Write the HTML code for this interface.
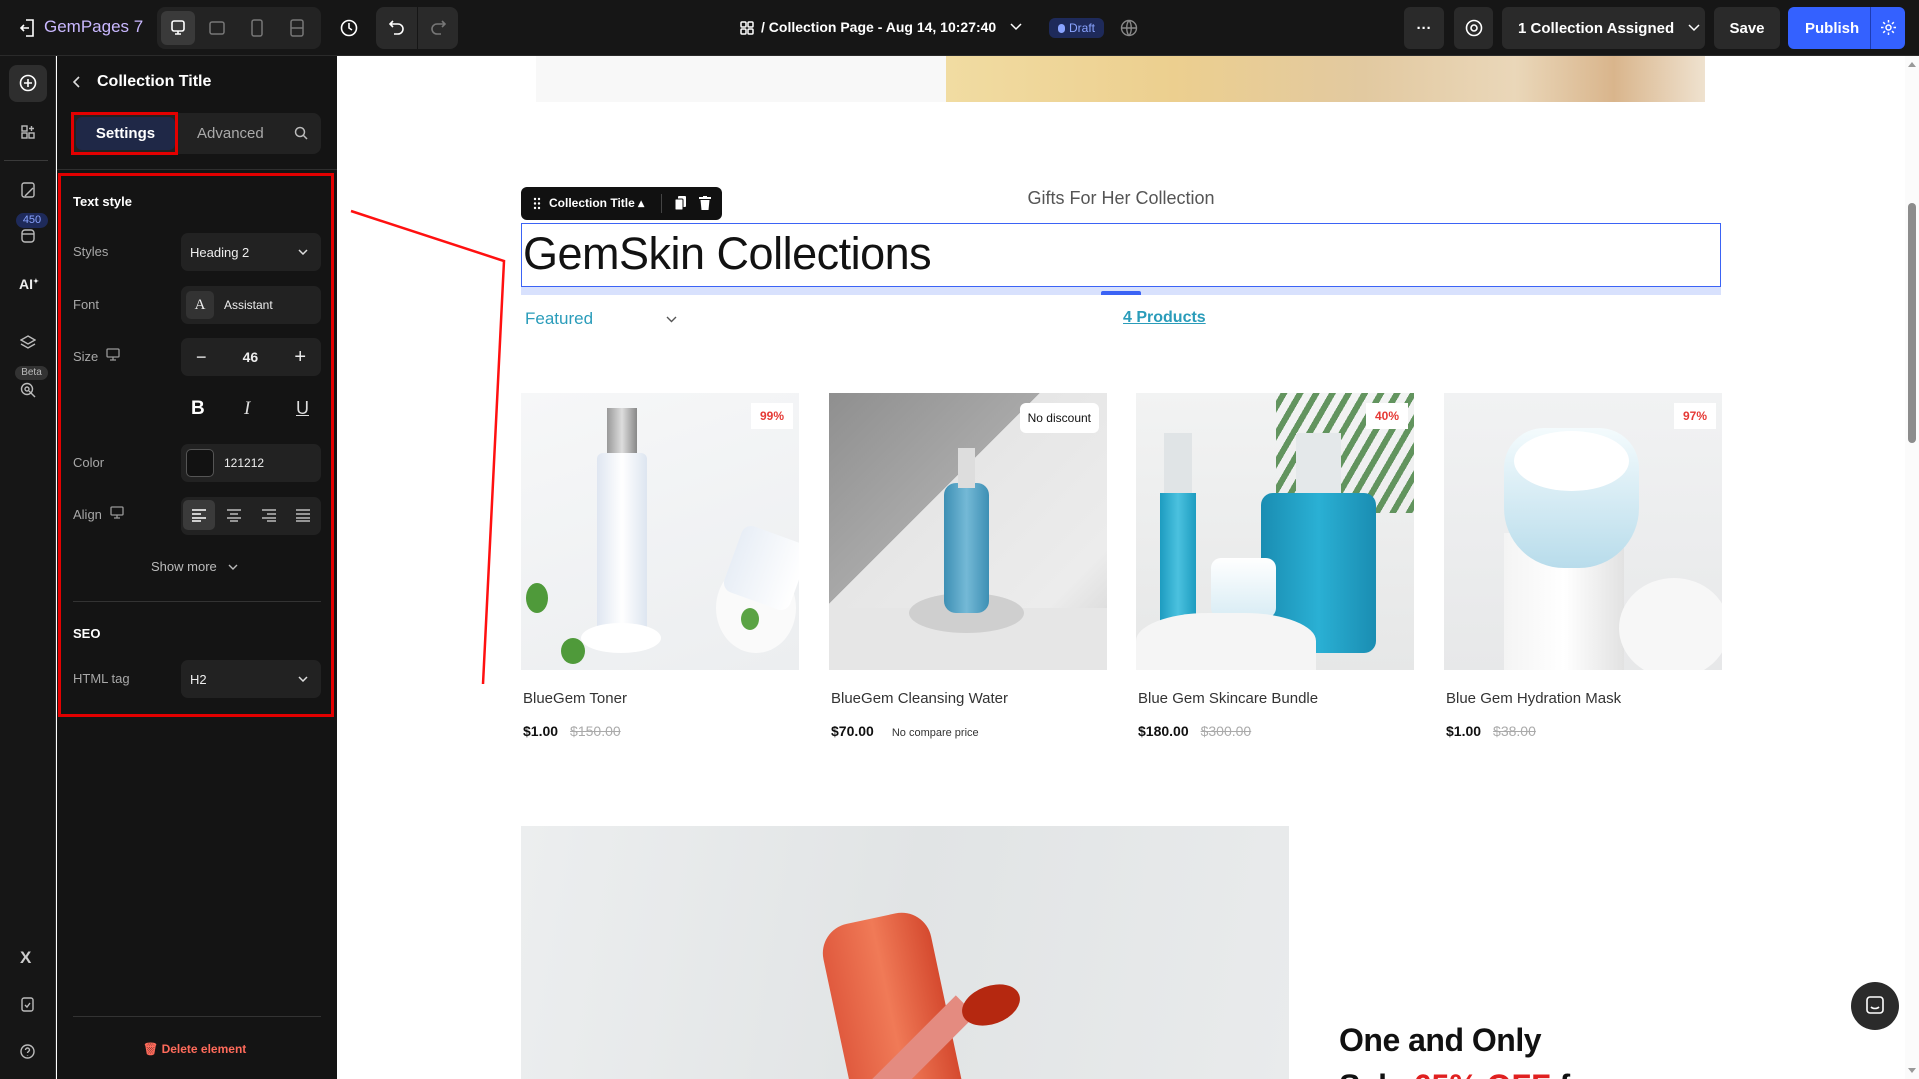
<!DOCTYPE html>
<html style="overflow:hidden;height:1079px"><head><meta charset="utf-8"><style>
*{box-sizing:border-box;margin:0;padding:0}
body{width:1919px;height:1079px;overflow:hidden;background:#fff;font-family:"Liberation Sans",sans-serif;position:relative}
.a{position:absolute}
.top{left:0;top:0;width:1919px;height:56px;background:#161616;border-bottom:1px solid #2a2a2a}
.btn{position:absolute;background:#2a2a2a;border-radius:6px;color:#fff;font-size:15px;font-weight:bold;display:flex;align-items:center;justify-content:center}
.rail{left:0;top:56px;width:56px;height:1023px;background:#161616;border-right:1px solid #2c2c2c}
.panel{left:57px;top:56px;width:280px;height:1023px;background:#141414}
.lbl{position:absolute;left:73px;color:#a8a8a8;font-size:13px}
.inp{position:absolute;left:181px;width:140px;height:38px;background:#222;border-radius:7px;color:#eee;font-size:13px;display:flex;align-items:center}
.card{position:absolute;top:393px;width:278px;height:277px;overflow:hidden}
.badge{position:absolute;top:10px;right:6px;background:#fff;color:#e53935;font-size:12px;font-weight:bold;padding:6px 9px}
.pn{position:absolute;top:690px;font-size:15px;color:#333}
.pp{position:absolute;top:723px;font-size:14px;font-weight:bold;color:#111}
.old{font-weight:normal;color:#aaa;text-decoration:line-through;margin-left:12px}
svg{display:block}
</style></head><body>
<div class="a top">
 <svg class="a" style="left:20px;top:19px" width="16" height="18" viewBox="0 0 16 18" fill="none" stroke="#fff" stroke-width="1.6"><path d="M6 1h7v16H6M9 9H1M4 6l-3 3 3 3"/></svg>
 <div class="a" style="left:44px;top:17px;color:#c9b8ff;font-size:17px">GemPages 7</div>
 <div class="a" style="left:157px;top:7px;width:164px;height:42px;background:#232323;border-radius:8px"></div>
 <div class="a" style="left:161px;top:11px;width:34px;height:34px;background:#3a3a3a;border-radius:6px"></div>
 <svg class="a" style="left:170px;top:20px" width="16" height="16" fill="none" stroke="#fff" stroke-width="1.6"><rect x="2" y="1" width="12" height="10" rx="2"/><path d="M8 11v3M5 14h6"/></svg>
 <svg class="a" style="left:209px;top:20px" width="16" height="16" fill="none" stroke="#777" stroke-width="1.5"><rect x="1" y="2" width="14" height="12" rx="2"/></svg>
 <svg class="a" style="left:251px;top:19px" width="12" height="18" fill="none" stroke="#777" stroke-width="1.5"><rect x="1" y="1" width="10" height="16" rx="2"/></svg>
 <svg class="a" style="left:289px;top:19px" width="16" height="18" fill="none" stroke="#777" stroke-width="1.5"><rect x="2" y="1" width="12" height="16" rx="2"/><path d="M2 9h12"/></svg>
 <svg class="a" style="left:340px;top:19px" width="18" height="18" fill="none" stroke="#fff" stroke-width="1.6"><circle cx="9" cy="9" r="7.5"/><path d="M9 4v5l3 2"/></svg>
 <div class="a" style="left:376px;top:7px;width:82px;height:42px;background:#2a2a2a;border-radius:8px"></div>
 <div class="a" style="left:417px;top:7px;width:1px;height:42px;background:#161616"></div>
 <svg class="a" style="left:389px;top:19px" width="16" height="18" fill="none" stroke="#fff" stroke-width="1.6"><path d="M4 2L1 5l3 3M1 5h8a5 5 0 010 10H5"/></svg>
 <svg class="a" style="left:430px;top:19px" width="16" height="18" fill="none" stroke="#777" stroke-width="1.6"><path d="M12 2l3 3-3 3M15 5H7a5 5 0 000 10h4"/></svg>
 <svg class="a" style="left:740px;top:21px" width="14" height="14" fill="none" stroke="#fff" stroke-width="1.5"><rect x="1" y="1" width="5" height="5" rx="1"/><rect x="8" y="1" width="5" height="5" rx="1"/><rect x="1" y="8" width="5" height="5" rx="1"/><rect x="8" y="8" width="5" height="5" rx="1"/></svg>
 <div class="a" style="left:761px;top:19px;color:#fff;font-size:14px;font-weight:bold">/ Collection Page - Aug 14, 10:27:40</div>
 <svg class="a" style="left:1010px;top:23px" width="12" height="8" fill="none" stroke="#fff" stroke-width="1.5"><path d="M1 1l5 5 5-5"/></svg>
 <div class="a" style="left:1049px;top:18px;width:55px;height:20px;background:#1e2a5a;border-radius:6px;color:#8aa4ff;font-size:12px;display:flex;align-items:center;justify-content:center"><span style="display:inline-block;width:7px;height:9px;border-radius:4px;background:#8aa4ff;margin-right:4px"></span>Draft</div>
 <svg class="a" style="left:1120px;top:19px" width="18" height="18" fill="none" stroke="#888" stroke-width="1.4"><circle cx="9" cy="9" r="7.5"/><path d="M1.5 9h15M9 1.5c-3 3-3 12 0 15M9 1.5c3 3 3 12 0 15"/></svg>
 <div class="btn" style="left:1404px;top:7px;width:40px;height:42px">···</div>
 <div class="btn" style="left:1454px;top:7px;width:39px;height:42px"><svg width="18" height="18" fill="none" stroke="#fff" stroke-width="1.6"><circle cx="9" cy="9" r="7.5"/><circle cx="9" cy="9" r="3"/></svg></div>
 <div class="btn" style="left:1502px;top:7px;width:203px;height:42px;justify-content:flex-start;padding-left:16px">1 Collection Assigned<svg style="margin-left:14px" width="12" height="8" fill="none" stroke="#fff" stroke-width="1.5"><path d="M1 1l5 5 5-5"/></svg></div>
 <div class="btn" style="left:1714px;top:7px;width:66px;height:42px">Save</div>
 <div class="btn" style="left:1788px;top:7px;width:117px;height:42px;background:#3461ff;justify-content:flex-start;padding-left:17px">Publish</div>
 <div class="a" style="left:1870px;top:7px;width:1px;height:42px;background:#1d3cb5"></div>
 <svg class="a" style="left:1880px;top:19px" width="17" height="17" fill="none" stroke="#fff" stroke-width="1.5"><circle cx="8.5" cy="8.5" r="2.5"/><path d="M8.5 1v2.5M8.5 13.5V16M1 8.5h2.5M13.5 8.5H16M3.2 3.2l1.8 1.8M12 12l1.8 1.8M3.2 13.8L5 12M12 5l1.8-1.8"/></svg>
</div>
<div class="a rail">
 <div class="a" style="left:9px;top:9px;width:38px;height:37px;background:#2e2e2e;border-radius:8px"></div>
 <svg class="a" style="left:19px;top:18px" width="18" height="18" fill="none" stroke="#fff" stroke-width="1.6"><circle cx="9" cy="9" r="7.5"/><path d="M9 5v8M5 9h8"/></svg>
 <svg class="a" style="left:21px;top:69px" width="14" height="14" fill="none" stroke="#bbb" stroke-width="1.4"><rect x="1" y="1" width="5" height="5"/><rect x="1" y="8" width="5" height="5"/><rect x="8" y="8" width="5" height="5"/><path d="M10.5 1v5M8 3.5h5"/></svg>
 <div class="a" style="left:4px;top:104px;width:44px;height:1px;background:#3a3a3a"></div>
 <svg class="a" style="left:21px;top:126px" width="14" height="16" fill="none" stroke="#bbb" stroke-width="1.4"><rect x="1" y="1" width="12" height="14" rx="2"/><path d="M4 14l8-8"/></svg>
 <div class="a" style="left:16px;top:157px;width:32px;height:15px;background:#1e2a5a;border-radius:8px;color:#8aa4ff;font-size:11px;text-align:center;line-height:15px">450</div>
 <svg class="a" style="left:21px;top:173px" width="14" height="14" fill="none" stroke="#bbb" stroke-width="1.4"><rect x="1" y="1" width="12" height="12" rx="3"/><path d="M1 5h12"/></svg>
 <div class="a" style="left:19px;top:220px;color:#eee;font-size:14px;font-weight:bold">AI<sup style="font-size:7px">✦</sup></div>
 <svg class="a" style="left:20px;top:279px" width="16" height="16" fill="none" stroke="#bbb" stroke-width="1.4"><path d="M8 1l7 4-7 4-7-4zM1 9l7 4 7-4"/></svg>
 <div class="a" style="left:15px;top:310px;width:33px;height:14px;background:#333;border-radius:7px;color:#bbb;font-size:10px;text-align:center;line-height:14px">Beta</div>
 <svg class="a" style="left:20px;top:326px" width="16" height="16" fill="none" stroke="#bbb" stroke-width="1.4"><circle cx="7" cy="7" r="5.5"/><circle cx="7" cy="7" r="2"/><path d="M9 9l6 6"/></svg>
 <div class="a" style="left:20px;top:892px;color:#ccc;font-size:17px;font-weight:bold">X</div>
 <svg class="a" style="left:21px;top:940px" width="13" height="16" fill="none" stroke="#bbb" stroke-width="1.4"><rect x="1" y="2" width="11" height="13" rx="2"/><path d="M4 9l2 2 3-4"/></svg>
 <svg class="a" style="left:20px;top:988px" width="15" height="15" fill="none" stroke="#bbb" stroke-width="1.4"><circle cx="7.5" cy="7.5" r="6.5"/><path d="M5.5 6a2 2 0 114 0c0 1.5-2 1.5-2 3M7.5 11v.5"/></svg>
</div>
<div class="a panel"></div>
<svg class="a" style="left:73px;top:76px" width="8" height="12" fill="none" stroke="#ddd" stroke-width="1.6"><path d="M6 1L1 6l5 5"/></svg>
<div class="a" style="left:97px;top:73px;color:#fff;font-size:16px;font-weight:bold">Collection Title</div>
<div class="a" style="left:71px;top:113px;width:250px;height:41px;background:#222;border-radius:8px"></div>
<div class="a" style="left:76px;top:117px;width:99px;height:33px;background:#1f2847;border-radius:6px;color:#fff;font-size:15px;font-weight:bold;text-align:center;line-height:33px">Settings</div>
<div class="a" style="left:71px;top:112px;width:107px;height:43px;border:3px solid #e30000"></div>
<div class="a" style="left:197px;top:125px;color:#aaa;font-size:15px">Advanced</div>
<svg class="a" style="left:294px;top:126px" width="14" height="14" fill="none" stroke="#bbb" stroke-width="1.5"><circle cx="6" cy="6" r="4.5"/><path d="M9.5 9.5l3.5 3.5"/></svg>
<div class="a" style="left:57px;top:169px;width:280px;height:1px;background:#2e2e2e"></div>
<div class="a" style="left:58px;top:173px;width:276px;height:544px;border:3px solid #e30000"></div>
<div class="a" style="left:73px;top:194px;color:#fff;font-size:13px;font-weight:bold">Text style</div>
<div class="lbl" style="top:244px">Styles</div>
<div class="inp" style="top:233px;padding-left:9px">Heading 2<svg style="position:absolute;right:13px" width="10" height="6" fill="none" stroke="#ddd" stroke-width="1.5"><path d="M1 1l4 4 4-4"/></svg></div>
<div class="lbl" style="top:297px">Font</div>
<div class="inp" style="top:286px"><span style="width:28px;height:28px;margin:0 10px 0 5px;background:#333;border-radius:5px;text-align:center;line-height:28px;font-family:'Liberation Serif',serif;font-size:15px">A</span><span style="font-size:12px">Assistant</span></div>
<div class="lbl" style="top:349px">Size</div>
<svg class="a" style="left:106px;top:348px" width="14" height="13" fill="none" stroke="#999" stroke-width="1.3"><rect x="1" y="1" width="12" height="8" rx="1"/><path d="M7 9v3M4 12h6"/></svg>
<div class="inp" style="top:338px;justify-content:space-between;padding:0 15px;font-size:14px;font-weight:bold"><span style="font-size:18px;font-weight:normal">−</span><span>46</span><span style="font-size:20px;font-weight:normal">+</span></div>
<div class="a" style="left:191px;top:398px;color:#fff;font-size:19px;font-weight:bold">B</div>
<div class="a" style="left:244px;top:398px;color:#ddd;font-size:19px;font-style:italic;font-family:'Liberation Serif',serif">I</div>
<div class="a" style="left:296px;top:398px;color:#ddd;font-size:18px;text-decoration:underline">U</div>
<div class="lbl" style="top:455px">Color</div>
<div class="inp" style="top:444px"><span style="width:28px;height:28px;margin:0 10px 0 5px;background:#121212;border:1px solid #555;border-radius:5px"></span><span style="font-size:12px">121212</span></div>
<div class="lbl" style="top:507px">Align</div>
<svg class="a" style="left:110px;top:506px" width="14" height="13" fill="none" stroke="#999" stroke-width="1.3"><rect x="1" y="1" width="12" height="8" rx="1"/><path d="M7 9v3M4 12h6"/></svg>
<div class="inp" style="top:497px"></div>
<div class="a" style="left:183px;top:500px;width:32px;height:30px;background:#3a3a3a;border-radius:5px"></div>
<svg class="a" style="left:191px;top:508px" width="16" height="14" stroke="#fff" stroke-width="1.4"><path d="M1 2h14M1 6h9M1 10h14M1 13h9"/></svg>
<svg class="a" style="left:226px;top:508px" width="16" height="14" stroke="#bbb" stroke-width="1.4"><path d="M1 2h14M4 6h8M1 10h14M4 13h8"/></svg>
<svg class="a" style="left:261px;top:508px" width="16" height="14" stroke="#bbb" stroke-width="1.4"><path d="M1 2h14M6 6h9M1 10h14M6 13h9"/></svg>
<svg class="a" style="left:295px;top:508px" width="16" height="14" stroke="#bbb" stroke-width="1.4"><path d="M1 2h14M1 6h14M1 10h14M1 13h14"/></svg>
<div class="a" style="left:151px;top:559px;color:#bbb;font-size:13px">Show more</div>
<svg class="a" style="left:228px;top:564px" width="10" height="6" fill="none" stroke="#bbb" stroke-width="1.4"><path d="M1 1l4 4 4-4"/></svg>
<div class="a" style="left:73px;top:601px;width:248px;height:1px;background:#333"></div>
<div class="a" style="left:73px;top:626px;color:#fff;font-size:13px;font-weight:bold">SEO</div>
<div class="lbl" style="top:671px">HTML tag</div>
<div class="inp" style="top:660px;padding-left:9px">H2<svg style="position:absolute;right:13px" width="10" height="6" fill="none" stroke="#ddd" stroke-width="1.5"><path d="M1 1l4 4 4-4"/></svg></div>
<div class="a" style="left:73px;top:1016px;width:248px;height:1px;background:#333"></div>
<div class="a" style="left:143px;top:1042px;color:#ff6b5b;font-size:12px;font-weight:bold">🗑︎ Delete element</div>
<svg class="a" style="left:337px;top:56px" width="1568" height="1023"><path d="M14 155L167 205L146 628" fill="none" stroke="#ff1010" stroke-width="2.5"/></svg>
<div class="a" style="left:536px;top:56px;width:410px;height:46px;background:#f8f8f8"></div>
<div class="a" style="left:946px;top:56px;width:759px;height:46px;background:linear-gradient(90deg,#f1dca2,#eccf8f 30%,#e2c9a0 55%,#ead7b9 75%,#d9b58c 88%,#efe2cf)"></div>
<div class="a" style="left:521px;top:188px;width:1200px;text-align:center;color:#555;font-size:18px">Gifts For Her Collection</div>
<div class="a" style="left:521px;top:187px;width:201px;height:33px;background:#111;border-radius:6px;color:#fff;font-size:12px;font-weight:bold;line-height:33px;padding-left:28px">Collection Title ▴</div>
<svg class="a" style="left:533px;top:197px" width="8" height="13" fill="#fff"><circle cx="2" cy="2" r="1.2"/><circle cx="6" cy="2" r="1.2"/><circle cx="2" cy="6.5" r="1.2"/><circle cx="6" cy="6.5" r="1.2"/><circle cx="2" cy="11" r="1.2"/><circle cx="6" cy="11" r="1.2"/></svg>
<div class="a" style="left:661px;top:194px;width:1px;height:19px;background:#444"></div>
<svg class="a" style="left:675px;top:196px" width="11" height="14" fill="#fff"><rect x="3" y="0" width="8" height="11" rx="1"/><rect x="0" y="3" width="8" height="11" rx="1" stroke="#111"/></svg>
<svg class="a" style="left:699px;top:196px" width="12" height="14" fill="#fff"><rect x="0" y="1" width="12" height="2"/><rect x="4" y="0" width="4" height="2"/><path d="M1.5 4h9l-1 10h-7z"/></svg>
<div class="a" style="left:521px;top:223px;width:1200px;height:64px;border:1.5px solid #3b63f5"></div>
<div class="a" style="left:521px;top:287px;width:1200px;height:8px;background:#d8e1fd"></div>
<div class="a" style="left:1101px;top:291px;width:40px;height:4px;background:#3b63f5;border-radius:2px 2px 0 0"></div>
<div class="a" style="left:523px;top:228px;color:#121212;font-size:45px;letter-spacing:-0.5px">GemSkin Collections</div>
<div class="a" style="left:525px;top:309px;color:#2a9cba;font-size:17px">Featured</div>
<svg class="a" style="left:666px;top:316px" width="11" height="7" fill="none" stroke="#555" stroke-width="1.4"><path d="M1 1l4.5 4.5L10 1"/></svg>
<div class="a" style="left:1123px;top:309px;color:#2a9cba;font-size:16px;font-weight:bold;text-decoration:underline">4 Products</div>
<div class="card" style="left:521px;background:linear-gradient(160deg,#f6f7f8,#eceef0)">
 <div class="a" style="left:86px;top:15px;width:30px;height:45px;background:linear-gradient(90deg,#999,#ddd,#888)"></div>
 <div class="a" style="left:76px;top:60px;width:50px;height:180px;background:linear-gradient(90deg,#dfe6f1,#fff,#dde5f0);border-radius:6px"></div>
 <div class="a" style="left:60px;top:230px;width:80px;height:30px;background:#fff;border-radius:50%"></div>
 <div class="a" style="left:195px;top:170px;width:80px;height:90px;background:#fafafa;border-radius:50%"></div>
 <div class="a" style="left:210px;top:140px;width:70px;height:70px;background:linear-gradient(90deg,#e8eef6,#fff);border-radius:10px;transform:rotate(20deg)"></div>
 <div class="a" style="left:5px;top:190px;width:22px;height:30px;background:#4f9a3a;border-radius:50%"></div>
 <div class="a" style="left:40px;top:245px;width:24px;height:26px;background:#4f9a3a;border-radius:50%"></div>
 <div class="a" style="left:220px;top:215px;width:18px;height:22px;background:#5aa344;border-radius:50%"></div>
 <div class="badge">99%</div>
</div>
<div class="card" style="left:829px;background:linear-gradient(135deg,#8f8f8f 0%,#a8a8a8 38%,#e6e6e6 38%,#ececec 78%,#d0d0d0 100%)">
 <div class="a" style="left:0;top:215px;width:278px;height:62px;background:#e6e6e6"></div>
 <div class="a" style="left:80px;top:200px;width:115px;height:40px;background:#cfcfcf;border-radius:50%"></div>
 <div class="a" style="left:115px;top:90px;width:45px;height:130px;background:linear-gradient(90deg,#3d8fb4,#74b9d6,#3d8fb4);border-radius:12px"></div>
 <div class="a" style="left:129px;top:55px;width:17px;height:40px;background:#ddd"></div>
 <div class="a" style="right:8px;top:10px;background:#fff;border-radius:6px;font-size:12px;padding:8px 8px;color:#111">No discount</div>
</div>
<div class="card" style="left:1136px;background:linear-gradient(180deg,#f2f3f3,#e6e7e7)">
 <div class="a" style="left:140px;top:-20px;width:160px;height:140px;background:repeating-linear-gradient(120deg,#3f7d3a 0 6px,transparent 6px 14px);opacity:.8"></div>
 <div class="a" style="left:24px;top:100px;width:36px;height:150px;background:linear-gradient(90deg,#1d9cc0,#4bc1df,#1d9cc0)"></div>
 <div class="a" style="left:28px;top:40px;width:28px;height:60px;background:#e0e4e6"></div>
 <div class="a" style="left:125px;top:100px;width:115px;height:160px;background:linear-gradient(90deg,#1a8db2,#2ab0d4,#1a8db2);border-radius:12px"></div>
 <div class="a" style="left:160px;top:40px;width:45px;height:60px;background:#e4e8ea"></div>
 <div class="a" style="left:75px;top:165px;width:65px;height:60px;background:linear-gradient(#fff,#d8ecf4);border-radius:10px"></div>
 <div class="a" style="left:0;top:220px;width:180px;height:70px;background:#f5f5f5;border-radius:40% 40% 0 0"></div>
 <div class="badge">40%</div>
</div>
<div class="card" style="left:1444px;background:linear-gradient(180deg,#f1f2f3,#e7e8e9)">
 <div class="a" style="left:60px;top:140px;width:120px;height:137px;background:linear-gradient(90deg,#f4f4f4,#fff,#e2e2e2)"></div>
 <div class="a" style="left:60px;top:35px;width:135px;height:140px;background:linear-gradient(180deg,#f4fbfd,#b8dceb);border-radius:40px 40px 60px 60px"></div>
 <div class="a" style="left:70px;top:38px;width:115px;height:60px;background:#fff;border-radius:50%"></div>
 <div class="a" style="left:175px;top:185px;width:110px;height:100px;background:#f7f7f7;border-radius:50%"></div>
 <div class="badge">97%</div>
</div>
<div class="pn" style="left:523px">BlueGem Toner</div>
<div class="pp" style="left:523px">$1.00<span class="old">$150.00</span></div>
<div class="pn" style="left:831px">BlueGem Cleansing Water</div>
<div class="pp" style="left:831px">$70.00<span style="font-weight:normal;font-size:11px;margin-left:18px;color:#333">No compare price</span></div>
<div class="pn" style="left:1138px">Blue Gem Skincare Bundle</div>
<div class="pp" style="left:1138px">$180.00<span class="old">$300.00</span></div>
<div class="pn" style="left:1446px">Blue Gem Hydration Mask</div>
<div class="pp" style="left:1446px">$1.00<span class="old">$38.00</span></div>
<div class="a" style="left:521px;top:826px;width:768px;height:253px;background:linear-gradient(100deg,#eceeef,#e1e4e5 50%,#e9ebec);overflow:hidden">
 <div class="a" style="left:320px;top:90px;width:110px;height:240px;background:linear-gradient(90deg,#e05a3e,#f07a57,#d54a2f);border-radius:30px 30px 0 0;transform:rotate(-12deg)"></div>
 <div class="a" style="left:360px;top:150px;width:28px;height:200px;background:#e48b80;transform:rotate(45deg)"></div>
 <div class="a" style="left:440px;top:160px;width:60px;height:38px;background:#b52810;border-radius:50%;transform:rotate(-20deg)"></div>
</div>
<div class="a" style="left:0;top:0;width:1919px;height:1079px;overflow:hidden;pointer-events:none">
<div class="a" style="left:1339px;top:1022px;color:#111;font-size:32px;font-weight:bold;letter-spacing:-.5px">One and Only</div>
<div class="a" style="left:1339px;top:1068px;color:#111;font-size:32px;font-weight:bold;white-space:nowrap">Sale <span style="color:#e02020">65% OFF</span> f</div>
</div>
<div class="a" style="left:1851px;top:982px;width:48px;height:48px;border-radius:50%;background:#2b2b2b"></div>
<svg class="a" style="left:1866px;top:996px" width="18" height="20" fill="none" stroke="#fff" stroke-width="1.6"><rect x="1" y="1" width="16" height="16" rx="3"/><path d="M5 11c2 2 6 2 8 0"/></svg>
<div class="a" style="left:1905px;top:56px;width:14px;height:1023px;background:#fbfbfb"></div>
<div class="a" style="left:1908px;top:203px;width:8px;height:240px;background:#8c8c8c;border-radius:4px"></div>
<div class="a" style="left:1908px;top:62px;width:0;height:0;border-left:4px solid transparent;border-right:4px solid transparent;border-bottom:5px solid #999"></div>
<div class="a" style="left:1908px;top:1068px;width:0;height:0;border-left:4px solid transparent;border-right:4px solid transparent;border-top:5px solid #999"></div>
</body></html>
